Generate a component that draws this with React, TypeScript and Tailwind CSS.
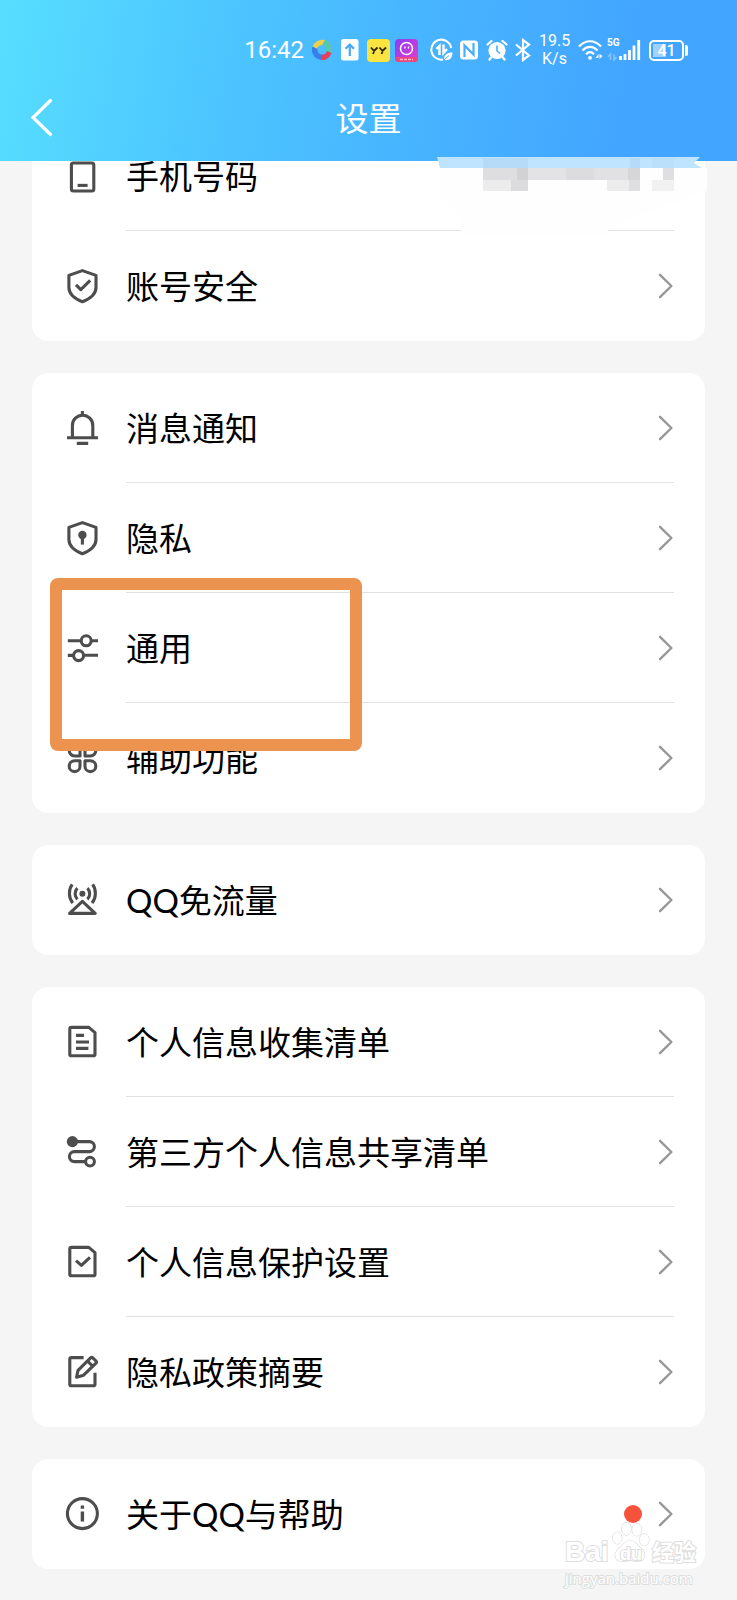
import React from 'react';

type IconName =
  | 'phone'
  | 'shieldCheck'
  | 'bell'
  | 'shieldKey'
  | 'sliders'
  | 'petals'
  | 'antenna'
  | 'doc'
  | 'route'
  | 'docCheck'
  | 'edit'
  | 'info';

interface SettingItem {
  label: string;
  icon: IconName;
  highlighted?: boolean;
  badge?: boolean;
  hideChevron?: boolean;
}

const GROUPS: SettingItem[][] = [
  [
    { label: '手机号码', icon: 'phone', hideChevron: true },
    { label: '账号安全', icon: 'shieldCheck' },
  ],
  [
    { label: '消息通知', icon: 'bell' },
    { label: '隐私', icon: 'shieldKey' },
    { label: '通用', icon: 'sliders', highlighted: true },
    { label: '辅助功能', icon: 'petals' },
  ],
  [{ label: 'QQ免流量', icon: 'antenna' }],
  [
    { label: '个人信息收集清单', icon: 'doc' },
    { label: '第三方个人信息共享清单', icon: 'route' },
    { label: '个人信息保护设置', icon: 'docCheck' },
    { label: '隐私政策摘要', icon: 'edit' },
  ],
  [{ label: '关于QQ与帮助', icon: 'info', badge: true }],
];

const SHIELD = 'M18.4 2.6 32 7.4V19.5C32 25.8 26.5 30.6 18.4 33.8 10.3 30.6 4.9 25.8 4.9 19.5V7.4Z';
const SHEET = 'M7.4 3.4H24.8L31 8.6V30.2a1.6 1.6 0 0 1-1.6 1.6H7.4A1.6 1.6 0 0 1 5.8 30.2V5A1.6 1.6 0 0 1 7.4 3.4Z';

const ICONS: Record<IconName, React.ReactNode> = {
  phone: (
    <>
      <rect x="7.4" y="5" width="22.4" height="28" rx="2" />
      <path d="M13.6 27.4h10" />
    </>
  ),
  shieldCheck: (
    <>
      <path d={SHIELD} />
      <path d="M12 16.8 16.8 21.6 26.2 12.4" />
    </>
  ),
  bell: (
    <>
      <path d="M18.4 1v4M8.4 27.4V15.4a10.2 10.2 0 0 1 20.4 0v12M3 27.8h31M12.8 33.4h11.4" />
    </>
  ),
  shieldKey: (
    <>
      <path d={SHIELD} />
      <circle cx="18.4" cy="15" r="4.2" fill="#4d4d4d" stroke="none" />
      <path d="M18.4 16v8.6" />
    </>
  ),
  sliders: (
    <>
      <path d="M3.8 10.8H17M27.6 10.8H34M3.8 25.4H9.6M20 25.2H34" />
      <circle cx="22.2" cy="10.8" r="5" />
      <circle cx="14.6" cy="25.6" r="5" />
    </>
  ),
  petals: (
    <>
      <path d="M16 16H10.6A5.4 5.4 0 1 1 16 10.6Z" />
      <path d="M21 16h5.4A5.4 5.4 0 1 0 21 10.6Z" />
      <path d="M16 20.8H10.6A5.4 5.4 0 1 0 16 26.2Z" />
      <path d="M21 20.8h5.4A5.4 5.4 0 1 1 21 26.2Z" />
    </>
  ),
  antenna: (
    <>
      <circle cx="18.4" cy="11.8" r="3" fill="#4d4d4d" stroke="none" />
      <path d="M18.4 19.4 31.2 31.4H5.6Z" />
      <path d="M13.4 6.2a8 8 0 0 0 0 11.2M23.4 6.2a8 8 0 0 1 0 11.2" />
      <path d="M8.2 2.4C4.4 7.4 4.4 16 8.8 21M28.6 2.4c3.8 5 3.8 13.6-.6 18.6" />
    </>
  ),
  doc: (
    <>
      <path d={SHEET} />
      <path d="M12 11.4h8M12 18h13M12 24.4h12.4" />
    </>
  ),
  route: (
    <>
      <circle cx="8.4" cy="7.6" r="5.6" fill="#4d4d4d" stroke="none" />
      <path d="M8.4 7.6H25.4a5 5 0 0 1 0 10H10.4a5 5 0 0 0 0 10H21.4" />
      <circle cx="26" cy="27.6" r="4.4" />
    </>
  ),
  docCheck: (
    <>
      <path d={SHEET} />
      <path d="M12 16.6 17.4 21.4 26 13.4" />
    </>
  ),
  edit: (
    <>
      <path d="M19.6 3.6H7.4A1.6 1.6 0 0 0 5.8 5.2V30.2a1.6 1.6 0 0 0 1.6 1.6H29.4A1.6 1.6 0 0 0 31 30.2V18.8" />
      <path d="M12.6 23.2 14 16.4 26.6 3.8a1.6 1.6 0 0 1 2.2 0L32 7a1.6 1.6 0 0 1 0 2.2L19.6 21.2Z" />
      <path d="M23.6 7.2 28.6 12.2" />
    </>
  ),
  info: (
    <>
      <circle cx="18.4" cy="17.6" r="15" />
      <path d="M18.4 15.6V25.6M18.4 9.6v3.2" strokeWidth="3.4" />
    </>
  ),
};

const RowIcon: React.FC<{ name: IconName }> = ({ name }) => (
  <svg
    viewBox="0 0 36 36"
    className="w-9 h-9 shrink-0"
    fill="none"
    stroke="#4d4d4d"
    strokeWidth="3.1"
    strokeLinejoin="round"
    aria-hidden="true"
  >
    {ICONS[name]}
  </svg>
);

const Chevron: React.FC = () => (
  <svg viewBox="0 0 16 28" className="w-4 h-7 shrink-0" fill="none" stroke="#979797" strokeWidth="2.4" strokeLinecap="round" strokeLinejoin="round" aria-hidden="true">
    <path d="M2 2.8 13.4 14 2 25.2" />
  </svg>
);

const SettingRow: React.FC<{ item: SettingItem; last: boolean }> = ({ item, last }) => (
  <li className="relative">
    <button type="button" className="flex w-full h-[110px] items-center gap-[26px] pl-8 pr-[31px] text-left">
      <RowIcon name={item.icon} />
      <span className={`flex flex-1 h-full items-center justify-between border-b ${last ? 'border-transparent' : 'border-[#e2e2e2]'}`}>
        <span className="text-[33px] leading-[48px] text-black">{item.label}</span>
        <span className="flex items-center gap-4">
          {item.badge && <span className="w-[18px] h-[18px] rounded-full bg-[#f4523b]" />}
          {!item.hideChevron && <Chevron />}
        </span>
      </span>
    </button>
    {item.highlighted && (
      <div className="absolute z-10 left-[18px] -top-[15px] w-[312px] h-[173px] rounded-lg border-[12px] border-[#ed9350] pointer-events-none" />
    )}
  </li>
);

const StatusBar: React.FC = () => (
  <div className="flex items-center justify-end h-[60px] pr-[49px] text-white">
    <span className="text-2xl leading-6 mr-[7px] font-[Roboto,sans-serif]">16:42</span>

    {/* colour wheel */}
    <svg viewBox="0 0 22 22" className="w-[22px] h-[22px] mr-2">
      <path d="M1.5 8C3.500 2.500 9 0 14 1L12.500 6.500C9 5.500 6.500 7 5.500 11Z" fill="#efcf4e" />
      <path d="M14 1C20 3 22.500 8.500 20.500 14.500L15 12.500C16 9.500 14.500 7 11 6Z" fill="#55c9ae" />
      <path d="M20.500 14C18.500 19.500 14 22 9 20.800L10.500 15.500C13.500 16 15.500 14.500 16 12Z" fill="#e5415a" />
      <path d="M10 21C2.500 19.500 -0.500 13.500 1.500 7.500L6.500 10C6 13 8 15 11.500 16Z" fill="#3a7cec" />
    </svg>

    {/* upload */}
    <svg viewBox="0 0 18 22" className="w-[18px] h-[22px] mr-2">
      <rect width="17.5" height="21.5" rx="2.5" fill="#fff" />
      <path d="M8.8 17V5.5M4.5 9.8 8.8 5.5 13 9.8" fill="none" stroke="#4aa9f2" strokeWidth="2.2" />
    </svg>

    {/* YY */}
    <svg viewBox="0 0 23 23" className="w-[23px] h-[23px] mr-[5px]">
      <rect width="23" height="23" rx="4" fill="#fbe43f" />
      <path d="M4 8.5 7 12 10.5 8.5M7.5 11.5 6 15M12.5 8.5 15.5 12 19 8.5M16 11.5 14.5 15" fill="none" stroke="#2a260c" strokeWidth="1.8" />
    </svg>

    {/* pink avatar */}
    <svg viewBox="0 0 23 23" className="w-[23px] h-[23px] mr-3">
      <defs>
        <linearGradient id="pink" x1="0" y1="0" x2="1" y2="1">
          <stop offset="0" stopColor="#8a3df0" />
          <stop offset="1" stopColor="#e83bd0" />
        </linearGradient>
      </defs>
      <rect width="23" height="23" rx="4" fill="url(#pink)" />
      <path d="M0 18h23v1a4 4 0 0 1-4 4H4a4 4 0 0 1-4-4Z" fill="#f0447c" />
      <path d="M5 20.5h13" stroke="#fbb0c8" strokeWidth="1.5" strokeDasharray="3 1" />
      <circle cx="11.5" cy="9.5" r="6" fill="none" stroke="#fff" strokeWidth="1.5" />
      <path d="M10 7.5v2M13.5 7.5v2" stroke="#fff" strokeWidth="1.4" />
    </svg>

    {/* data saver */}
    <svg viewBox="0 0 24 24" className="w-6 h-6 mr-[6px]" fill="none" stroke="#fff" strokeWidth="2">
      <path d="M21.2 10A10 10 0 1 0 13 21.5" />
      <path d="M6.5 11 9.5 8v9M13.5 6.5V15L17 11" strokeWidth="2.4" />
      <path d="M14 22C13.5 17 17 14.5 22.5 14.5 22.5 20 19.5 23 14 22Z" fill="#fff" stroke="none" />
      <path d="M14 22 19 17.5" stroke="#49b0ff" strokeWidth="1" />
    </svg>

    {/* NFC */}
    <svg viewBox="0 0 18 20" className="w-[18px] h-5 mr-2">
      <rect y="0.5" width="18" height="19" rx="3.5" fill="#fff" />
      <path d="M4.5 17V5.5L13.5 14.5V3" fill="none" stroke="#47afff" strokeWidth="2.2" />
    </svg>

    {/* alarm */}
    <svg viewBox="0 0 22 22" className="w-[22px] h-[22px] mr-[7px]">
      <circle cx="11" cy="11.5" r="8.6" fill="#fff" />
      <path d="M1.5 5.5 5.5 2M20.5 5.5 16.5 2M5 18.5 3.5 20.5M17 18.5 18.5 20.5" stroke="#fff" strokeWidth="2.2" strokeLinecap="round" />
      <path d="M11 6.5V12L14 14.5" fill="none" stroke="#47adff" strokeWidth="1.6" />
    </svg>

    {/* bluetooth */}
    <svg viewBox="0 0 16 24" className="w-4 h-6 mr-2" fill="none" stroke="#fff" strokeWidth="2.2">
      <path d="M1 6.5 14 17.5 8 22V2L14 6.5 1 17.5" />
    </svg>

    <span className="w-[31px] mr-2 text-center text-base leading-[18px] font-[Roboto,sans-serif]">
      19.5
      <br />
      K/s
    </span>

    {/* wifi */}
    <svg viewBox="0 0 25 22" className="w-[25px] h-[22px] mr-1" fill="none" stroke="#fff" strokeWidth="2.2">
      <path d="M1 7.5C7.5 0.5 16.5 0.5 23 7.5M4.5 11.5c4.5-4.8 10.5-4.8 15 0M8 15.2c2.5-2.5 5.5-2.5 8 0" />
      <circle cx="12" cy="18.8" r="1.9" fill="#fff" stroke="none" />
      <path d="M17.5 19h3v-4ZM21.5 15v5l3-3Z" fill="#fff" stroke="none" />
    </svg>

    {/* mobile signal */}
    <div className="relative w-[34px] h-6 mr-2">
      <span className="absolute left-0 top-0 text-[10px] leading-[10px] font-bold font-[Roboto,sans-serif]">5G</span>
      <svg viewBox="0 0 34 24" className="w-full h-full" fill="none" stroke="#fff">
        <path d="M13.5 22v-4M18 22v-6M22.5 22v-10M27 22V7.5M31.7 22V2" strokeWidth="2.8" />
        <path d="M3.5 22v-6L1 19M7 16v6l2.5-3" strokeWidth="1.5" opacity=".35" />
      </svg>
    </div>

    {/* battery */}
    <div className="flex items-center">
      <div className="relative w-[35px] h-[21px] rounded-[5px] border-2 border-white">
        <span className="absolute left-[2px] top-[2px] w-[13px] h-[13px] bg-white/50" />
        <span className="relative block text-center text-base leading-[17px] font-medium font-[Roboto,sans-serif]">41</span>
      </div>
      <span className="w-[3px] h-[11px] ml-px rounded-r-xs bg-white" />
    </div>
  </div>
);

// Pixelated phone number with the smear around it
const NumberMask: React.FC = () => (
  <svg viewBox="0 0 280 100" className="absolute top-[157px] right-[27px] w-[280px] h-[100px] pointer-events-none" aria-hidden="true">
    <path d="M10 11H277V34L248 44 178 70V78H31V60L10 40Z" fill="#fefefe" />
    <path d="M7 0H270L264 6 272 11H10Z" fill="#bfe4ff" />
    <g>
      <rect x="53" y="1" width="45" height="10" fill="#b6dbf8" />
      <rect x="200" y="1" width="10" height="10" fill="#b6dbf8" />
      <rect x="222" y="1" width="22" height="10" fill="#bbe0fb" />
      <rect x="53" y="11" width="34" height="12" fill="#dedee0" />
      <rect x="87" y="11" width="11" height="12" fill="#d2d2d5" />
      <rect x="98" y="11" width="38" height="12" fill="#e3e3e5" />
      <rect x="136" y="11" width="28" height="12" fill="#dcdcdf" />
      <rect x="164" y="11" width="34" height="12" fill="#e1e1e3" />
      <rect x="198" y="11" width="12" height="12" fill="#d6d6d9" />
      <rect x="233" y="11" width="11" height="12" fill="#dfdfe1" />
      <rect x="53" y="23" width="28" height="11" fill="#ececed" />
      <rect x="81" y="23" width="17" height="11" fill="#dcdcde" />
      <rect x="177" y="23" width="22" height="11" fill="#ececed" />
      <rect x="199" y="23" width="11" height="11" fill="#dfdfe1" />
      <rect x="222" y="23" width="22" height="11" fill="#f1f1f2" />
    </g>
  </svg>
);

const Watermark: React.FC = () => (
  <div className="absolute right-10 bottom-3 w-[132px] text-white [paint-order:stroke_fill] [-webkit-text-stroke:2px_#dedede] pointer-events-none">
    <div className="flex items-end h-12 font-bold leading-8">
      <span className="w-[45px] text-[28px] font-['Liberation_Sans',sans-serif]">Bai</span>
      <span className="relative flex w-[42px] h-full items-end justify-center">
        <svg viewBox="0 0 44 46" className="absolute inset-x-0 bottom-1 w-full h-[42px]" fill="#fff" stroke="#d9d9d9" strokeWidth="1.3">
          <ellipse cx="17" cy="7.5" rx="5.2" ry="6.8" />
          <ellipse cx="28.5" cy="8.5" rx="5.2" ry="6.8" />
          <ellipse cx="7" cy="17.5" rx="5" ry="6.5" />
          <ellipse cx="36.5" cy="19.5" rx="5.2" ry="6.5" />
          <path d="M21 20C26 20 28 25 33 29 40 35 37 43 30 43 26 43 25 42 21 42 17 42 16 43 12 43 4 43 2 35 9 29 14 25 16 20 21 20Z" />
        </svg>
        <span className="relative text-lg leading-7 font-['Liberation_Sans',sans-serif]">du</span>
      </span>
      <span className="text-[22px] leading-8 whitespace-nowrap">经验</span>
    </div>
    <p className="text-[15px] leading-5 whitespace-nowrap font-['Open_Sans',sans-serif]">jingyan.baidu.com</p>
  </div>
);

export default function App() {
  return (
    <div className="relative min-h-screen bg-[#f5f5f5] font-[Lato,'Noto_Sans_CJK_SC',sans-serif]">
      <header className="relative z-20 h-[161px] pt-5 bg-[linear-gradient(100deg,#57deff_0%,#4cc4ff_32%,#47b2ff_60%,#42a5ff_85%)]">
        <StatusBar />
        <div className="grid grid-cols-[1fr_auto_1fr] items-center h-[76px] px-[30px] text-white">
          <button type="button" aria-label="返回" className="w-6 h-10 justify-self-start">
            <svg viewBox="0 0 24 40" className="w-6 h-10" fill="none" stroke="currentColor" strokeWidth="3.2" strokeLinecap="round">
              <path d="M20.5 2.5 3 19.5 20.5 36.5" />
            </svg>
          </button>
          <h1 className="text-[33px] leading-[48px]">设置</h1>
        </div>
        <NumberMask />
      </header>

      <main className="-mt-10 px-8 pb-[31px] flex flex-col gap-8">
        {GROUPS.map((group, i) => (
          <ul key={i} className="bg-white rounded-2xl">
            {group.map((item, j) => (
              <SettingRow key={item.label} item={item} last={j === group.length - 1} />
            ))}
          </ul>
        ))}
      </main>

      <Watermark />
    </div>
  );
}
